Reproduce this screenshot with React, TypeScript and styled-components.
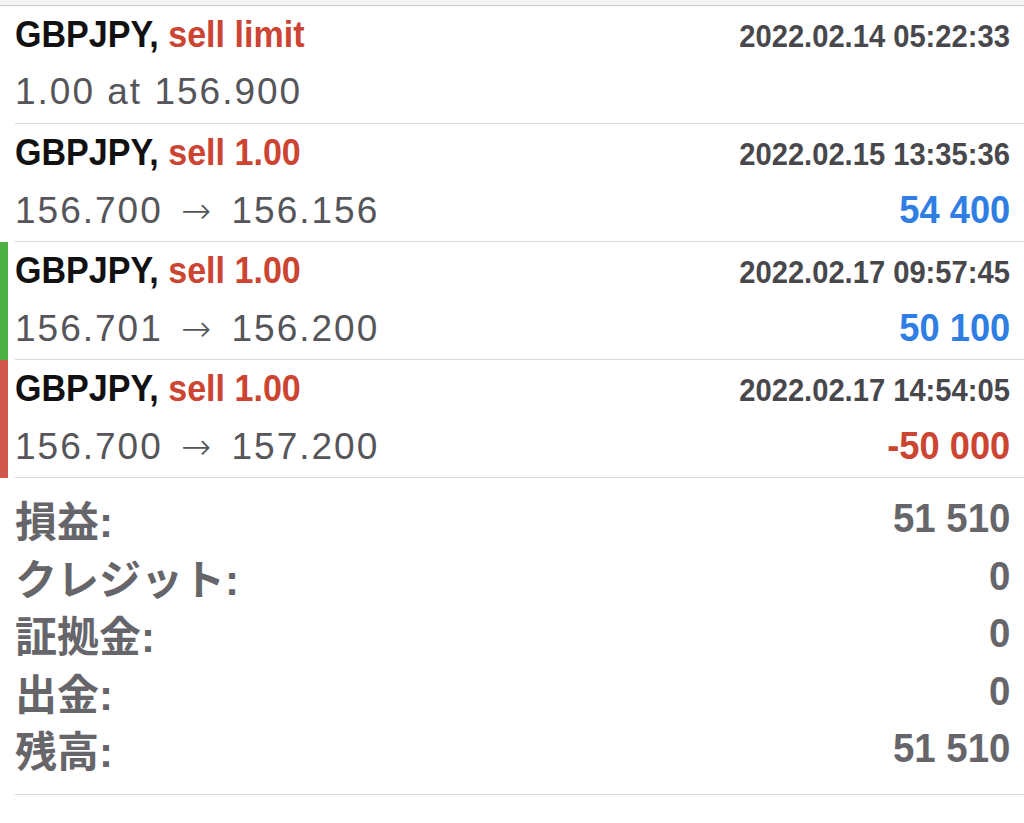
import React from 'react';
import styled, { createGlobalStyle } from 'styled-components';

const GlobalStyle = createGlobalStyle`
  html, body {
    margin: 0;
    padding: 0;
    background: #ffffff;
  }
`

const Page = styled.div`
  width: 1024px;
  height: 823px;
  background: #ffffff;
  overflow: hidden;
  font-family: "Liberation Sans", Arial, sans-serif;
`

const TopStrip = styled.div`
  height: 5px;
  background: #f4f4f4;
  border-bottom: 1px solid #c8c8c8;
`

const List = styled.div`
  display: flex;
  flex-direction: column;
`

const Row = styled.div<{ mark?: string }>`
  position: relative;
  height: 118px;
  padding-left: 15px;
  &::before {
    content: '';
    position: absolute;
    left: 0;
    top: 0;
    bottom: 0;
    width: 8px;
    background: ${p => p.mark || 'transparent'};
  }
`

const RowInner = styled.div`
  height: 117px;
  border-bottom: 1px solid #d9d9d9;
  padding-right: 14px;
  display: flex;
  flex-direction: column;
`

const Line = styled.div<{ top: number }>`
  display: flex;
  justify-content: space-between;
  align-items: baseline;
  height: 56px;
  padding-top: ${p => p.top}px;
  box-sizing: border-box;
`

// narrow bold face: the phone uses a condensed Helvetica, squeezed here
const Condensed = styled.span<{ origin?: string; squeeze?: number }>`
  display: inline-block;
  font-family: "Liberation Sans", Arial, sans-serif;
  font-weight: bold;
  transform: scaleX(${p => p.squeeze || 0.92});
  transform-origin: ${p => p.origin || 'left'} center;
  white-space: nowrap;
`

const Title = styled(Condensed)`
  font-size: 37px;
  color: #111111;
  line-height: 40px;
`

const Side = styled.span`
  color: #cc4432;
`

const Date = styled(Condensed)`
  font-size: 31px;
  color: #48484c;
  line-height: 40px;
`

const Prices = styled.span`
  font-size: 37px;
  color: #55555a;
  line-height: 40px;
  letter-spacing: 2px;
  white-space: nowrap;
`

const Arrow = styled.span`
  font-family: "DejaVu Sans", sans-serif;
  font-weight: 200;
  font-size: 36px;
  margin: 0 6px;
`

const Profit = styled(Condensed)<{ color: string }>`
  font-size: 39px;
  color: ${p => p.color};
  line-height: 40px;
`

const Summary = styled.div`
  margin-left: 15px;
  padding: 12px 14px 16px 0;
  border-bottom: 1px solid #d9d9d9;
  display: flex;
  flex-direction: column;
`

const SumRow = styled.div`
  display: flex;
  justify-content: space-between;
  align-items: center;
  height: 57.5px;
`

const Label = styled.span`
  font-family: "Liberation Sans", "Noto Sans CJK JP", sans-serif;
  font-weight: bold;
  font-size: 42px;
  color: #66666a;
`

const Value = styled(Condensed)`
  font-size: 40px;
  color: #66666a;
`

const trades = [
  { mark: '', side: 'sell limit', date: '2022.02.14 05:22:33', from: '1.00 at 156.900', to: '', profit: '', color: '' },
  { mark: '', side: 'sell 1.00', date: '2022.02.15 13:35:36', from: '156.700', to: '156.156', profit: '54 400', color: '#2f7ee3' },
  { mark: '#4caf43', side: 'sell 1.00', date: '2022.02.17 09:57:45', from: '156.701', to: '156.200', profit: '50 100', color: '#2f7ee3' },
  { mark: '#d0574b', side: 'sell 1.00', date: '2022.02.17 14:54:05', from: '156.700', to: '157.200', profit: '-50 000', color: '#cc4432' },
]

const totals = [
  ['損益:', '51 510'],
  ['クレジット:', '0'],
  ['証拠金:', '0'],
  ['出金:', '0'],
  ['残高:', '51 510'],
]

function App(): React.ReactElement {
  return (
    <Page>
      <GlobalStyle />
      <TopStrip />
      <List>
        {trades.map((t, i) => (
          <Row key={i} mark={t.mark}>
            <RowInner>
              <Line top={9}>
                <Title>GBPJPY, <Side>{t.side}</Side></Title>
                <Date origin="right" squeeze={0.94}>{t.date}</Date>
              </Line>
              <Line top={10}>
                <Prices>
                  {t.from}
                  {t.to && <> <Arrow>→</Arrow> {t.to}</>}
                </Prices>
                {t.profit && <Profit origin="right" squeeze={0.93} color={t.color}>{t.profit}</Profit>}
              </Line>
            </RowInner>
          </Row>
        ))}
      </List>
      <Summary>
        {totals.map(([label, value], i) => (
          <SumRow key={i}>
            <Label>{label}</Label>
            <Value origin="right" squeeze={0.96}>{value}</Value>
          </SumRow>
        ))}
      </Summary>
    </Page>
  );
}

export default App;
